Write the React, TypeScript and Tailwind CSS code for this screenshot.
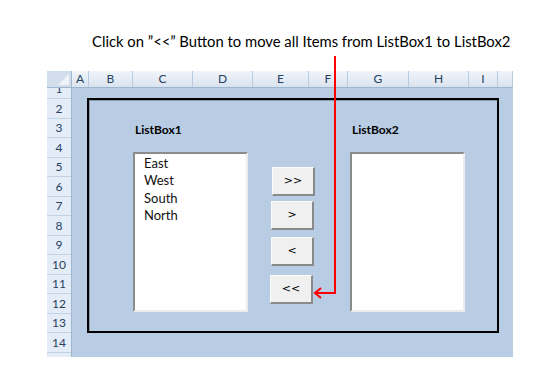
const cols = [
  { label: "A", w: "w-[17px]" },
  { label: "B", w: "w-[44px]" },
  { label: "C", w: "w-[60px]" },
  { label: "D", w: "w-[60px]" },
  { label: "E", w: "w-[56px]" },
  { label: "F", w: "w-[39px]" },
  { label: "G", w: "w-[61px]" },
  { label: "H", w: "w-[60px]" },
  { label: "I", w: "w-[29px]" },
  { label: "", w: "w-[15px]" },
];

// rows 2..14, heights alternate so 13 rows fill 254px
const rows = [2, 3, 4, 5, 6, 7, 8, 9, 10, 11, 12, 13, 14];

function ListBox({ items }: { items: string[] }) {
  return (
    <div className="w-[115px] h-[160px] bg-white border-2 border-t-[#8c8c8c] border-l-[#8c8c8c] border-r-[#ececec] border-b-[#ececec] pl-[9px] pt-[1px]">
      {items.map((it) => (
        <div key={it} className="text-[13px] leading-[17.3px] text-[#111]">
          {it}
        </div>
      ))}
    </div>
  );
}

function Btn({ label, className }: { label: string; className: string }) {
  return (
    <div
      className={`w-[43px] h-[29px] bg-[#f0f0f0] border border-t-[#fbfbfb] border-l-[#fbfbfb] border-r-2 border-b-2 border-r-[#8a8a8a] border-b-[#8a8a8a] flex items-center justify-center text-[11px] text-black font-['DejaVu_Sans',sans-serif] ${className}`}
    >
      {label}
    </div>
  );
}

export default function App() {
  return (
    <div className="relative w-[547px] h-[373px] bg-white font-['Lato',sans-serif] overflow-hidden">
      {/* Caption */}
      <p className="pl-[92px] pt-[32px] h-[71px] text-[14.8px] leading-[18px] text-black">
        Click on ”&lt;&lt;” Button to move all Items from ListBox1 to ListBox2
      </p>

      {/* Sheet */}
      <div className="ml-[47px] w-[466px] flex flex-col">
        {/* Column headers */}
        <div className="flex h-[17px] bg-linear-to-b from-[#f1f5fb] to-[#d9e3ef] border-b border-[#9fb6cf]">
          <div className="relative w-[25px] border-r border-[#9fb6cf] bg-[#d3deec]">
            <div className="absolute right-[2px] bottom-[2px] w-0 h-0 border-l-[11px] border-l-transparent border-b-[11px] border-b-[#eef3f9]" />
          </div>
          {cols.map((c, i) => (
            <div
              key={i}
              className={`${c.w} shrink-0 border-r border-[#b9cbdf] flex items-center justify-center text-[12px] text-[#27415f]`}
            >
              {c.label}
            </div>
          ))}
        </div>

        <div className="flex">
          {/* Row headers */}
          <div className="w-[25px] flex flex-col bg-[#e4ecf7] border-r border-[#9fb6cf]">
            <div className="h-[11px] flex items-end justify-center overflow-hidden border-b border-[#c3d3e6]">
              <span className="shrink-0 h-[19px] leading-[19px] text-[12px] text-[#27415f]">1</span>
            </div>
            {rows.map((r, i) => (
              <div
                key={r}
                className={`${i % 2 === 0 ? "h-[20px]" : "h-[19px]"} flex items-center justify-center border-b border-[#c3d3e6] text-[12px] text-[#27415f]`}
              >
                {r}
              </div>
            ))}
            <div className="h-[4px]" />
          </div>

          {/* Filled cell area with form */}
          <div className="flex-1 bg-[#b8cce4] pl-[15px] pt-[10px]">
            <div className="w-[412px] h-[235px] border-2 border-black shadow-[inset_1px_1px_0_#8a9bb0] flex pl-[44px]">
              <div className="flex flex-col pt-[22px]">
                <div className="text-[12px] font-bold leading-[16px] text-black pl-[2px] mb-[14px]">ListBox1</div>
                <ListBox items={["East", "West", "South", "North"]} />
              </div>

              <div className="flex flex-col ml-[23px] pt-[67px]">
                <Btn label=">>" className="ml-[1px]" />
                <Btn label=">" className="mt-[5px]" />
                <Btn label="<" className="mt-[7px]" />
                <Btn label="<<" className="mt-[9px] -ml-[1px]" />
              </div>

              <div className="flex flex-col ml-[35px] pt-[22px]">
                <div className="text-[12px] font-bold leading-[16px] text-black pl-[2px] mb-[14px]">ListBox2</div>
                <ListBox items={[]} />
              </div>
            </div>
          </div>
        </div>
      </div>

      {/* Red callout arrow */}
      <svg className="absolute left-0 top-0" width="547" height="373" viewBox="0 0 547 373">
        <path d="M335 56 V293 H316" fill="none" stroke="#ff0000" strokeWidth="2" />
        <path d="M321 288 L315 293 L321 298" fill="none" stroke="#ff0000" strokeWidth="2" />
      </svg>
    </div>
  );
}
